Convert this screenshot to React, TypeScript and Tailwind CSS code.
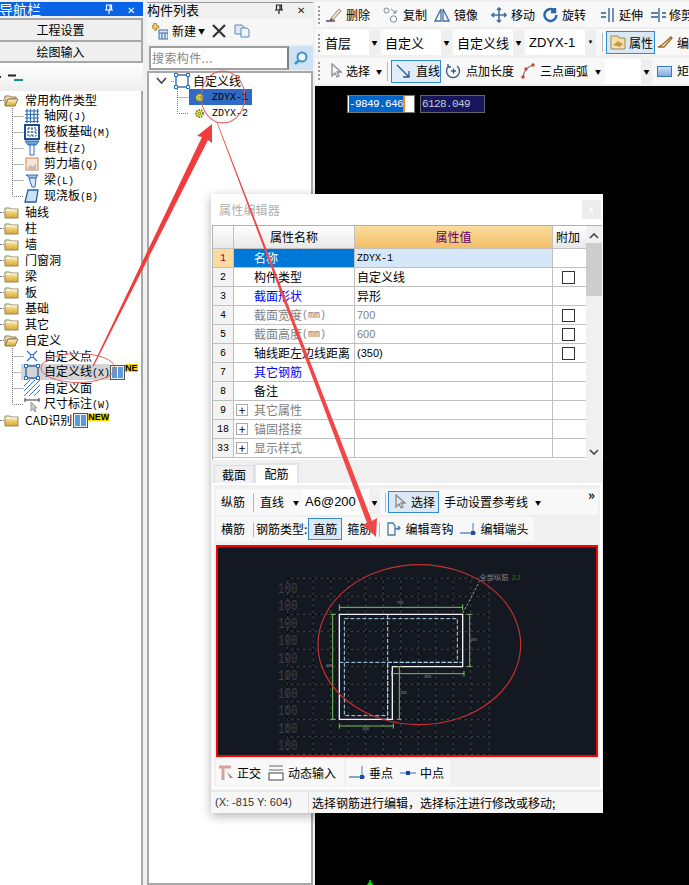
import React from "react";

const Folder = ({ open }: { open?: boolean }) => (
  <svg width="15" height="13" viewBox="0 0 15 13" className="shrink-0">
    <defs>
      <linearGradient id="fg" x1="0" y1="0" x2="0" y2="1">
        <stop offset="0" stopColor="#fff6c8" />
        <stop offset="1" stopColor="#d9a520" />
      </linearGradient>
    </defs>
    {open ? (
      <>
        <path d="M1 2h5l1 1h5v2H4L1 11z" fill="#f3e2a8" stroke="#8a7a5a" />
        <path d="M4 5h10l-3 7H1z" fill="url(#fg)" stroke="#8a7a5a" />
      </>
    ) : (
      <>
        <path d="M1 2h5l1 1h7v9H1z" fill="url(#fg)" stroke="#8a8a70" />
        <path d="M2 4h11" stroke="#fff8d8" />
      </>
    )}
  </svg>
);

const Ico = ({ n }: { n: string }) => {
  const c = "#2f6db5";
  const body: Record<string, React.ReactNode> = {
    grid: <path d="M1 3h14M1 6.5h14M1 10h14M1 13.5h14M3 1v14M6.5 1v14M10 1v14M13.5 1v14" stroke={c} strokeWidth="1.2" />,
    raft: <><rect x="1" y="1" width="14" height="14" fill="none" stroke="#1f4f8f" strokeWidth="2" /><path d="M4 4h8v8H4zM8 4v8M4 8h8" fill="none" stroke="#1f4f8f" strokeWidth="1" strokeDasharray="2 1" /></>,
    col: <><path d="M1 1h14l-3 4H4z" fill="#6fa3d8" stroke={c} /><path d="M6 5h4v10H6z" fill="#fff" stroke={c} /></>,
    wall: <><rect x="2" y="2" width="12" height="12" fill="#f4e6d6" stroke="#d88050" /><path d="M4 11l3-2 2 2 3-4v6H4z" fill="#aaa" opacity=".7" /></>,
    beam: <><path d="M2 3h12l-2 3H6z" fill="#a9cbe9" stroke={c} /><path d="M5 6l3 9h3l1-9z" fill="#d8e8f6" stroke={c} /></>,
    slab: <path d="M4 2h10l-2 12H1z" fill="#cfe2f5" stroke="#1f5fb0" strokeWidth="1.3" />,
    point: <><path d="M3 3l10 10M13 3L3 13" stroke="#3a79c0" strokeWidth="1.4" /><circle cx="8" cy="8" r="1.5" fill="#fff" stroke="#3a79c0" /></>,
    line: <><rect x="2" y="2" width="12" height="12" fill="none" stroke="#1f4f8f" strokeWidth="1.2" /><path d="M0.5 0.5h3v3h-3zM12.5 0.5h3v3h-3zM0.5 12.5h3v3h-3zM12.5 12.5h3v3h-3z" fill="#fff" stroke="#1a6ad0" /></>,
    face: <path d="M0 6l6-6M0 11L11 0M0 16L16 0M5 16L16 5M10 16l6-6" stroke="#3a79d0" strokeWidth="1" />,
    dim: <><path d="M1 2v4M15 2v4M1 4h14" stroke="#333" /><path d="M7 6v9l2-2 2 3 1-1-2-3h3z" fill="#ccc" stroke="#999" /></>,
  };
  return <svg width="16" height="16" viewBox="0 0 16 16" className="shrink-0">{body[n]}</svg>;
};

const Conn = ({ last }: { last?: boolean }) => (
  <svg width="12" height="16" className="shrink-0">
    <path d={last ? "M0.5 0v8.5H12" : "M0.5 0v16M0.5 8.5H12"} stroke="#777" strokeDasharray="1 1" fill="none" />
  </svg>
);

const Blocks = () => (
  <span className="w-[15px] h-[15px] border border-[#555] bg-[#e8f0f8] flex items-center justify-center gap-px shrink-0">
    <span className="w-[5px] h-[11px] bg-[#5b9bd8]" />
    <span className="w-[5px] h-[11px] bg-[#5b9bd8]" />
  </span>
);

const NewTag = ({ t }: { t: string }) => (
  <span className="font-['Liberation_Sans'] text-[9px] font-bold leading-[8px] bg-[#ffd800] text-black self-start">{t}</span>
);

const Mono = ({ children }: { children: React.ReactNode }) => (
  <span className="font-['Liberation_Mono'] text-[10px]">{children}</span>
);

const Root = ({ label, open, extra }: { label: React.ReactNode; open?: boolean; extra?: React.ReactNode }) => (
  <div className="h-4 flex items-center">
    <span className="w-[4px] border-t border-dotted border-[#777]" />
    <Folder open={open} />
    <span className="ml-[6px] whitespace-nowrap">{label}</span>
    {extra}
  </div>
);

const Child = ({ icon, label, last, sel, extra }: { icon: string; label: React.ReactNode; last?: boolean; sel?: boolean; extra?: React.ReactNode }) => (
  <div className="h-4 flex items-center pl-[12px]">
    <Conn last={last} />
    <div className={`flex items-center h-4 -ml-[3px] pl-[3px] ${sel ? "bg-[#d4d4d4]" : ""}`}>
      <Ico n={icon} />
      <span className="ml-[4px] whitespace-nowrap">{label}</span>
    </div>
    {extra}
  </div>
);

const LeftPanel = () => (
  <div className="w-[147px] h-full shrink-0 flex flex-col pt-[2px] pr-[4px] bg-[#f0f0f0]">
    <div className="h-[14px] bg-[#0a62e6] text-white flex items-center relative overflow-hidden text-[14px]">
      <span className="-ml-px whitespace-nowrap">导航栏</span>
      <span className="ml-auto mr-[8px] flex items-center gap-[13px] text-[10px]"><Pin c="#fff" /><span>✕</span></span>
    </div>
    <div className="h-[24px] mt-[2px] border-[2px] border-[#a8a8a8] border-l-0 bg-[#efefef] flex items-center justify-center pr-[20px] text-[12px]">工程设置</div>
    <div className="h-[21px] border-[2px] border-[#a8a8a8] border-l-0 border-t-0 bg-[#efefef] flex items-center justify-center pr-[20px] text-[12px]">绘图输入</div>
    <div className="h-[28px] bg-gradient-to-b from-white to-[#eeeeee] flex items-start pt-[10px]">
      <svg width="26" height="12"><path d="M0 4h1M8 2.5h8" stroke="#222" strokeWidth="2" /><path d="M14 7h9" stroke="#0f8f8f" strokeWidth="2" /></svg>
    </div>
    <div className="flex-1 bg-white border-r-[2px] border-[#a8a8a8] pt-[1px] text-[12px] leading-4 text-black">
      <Root open label="常用构件类型" />
      <Child icon="grid" label={<>轴网<Mono>(J)</Mono></>} />
      <Child icon="raft" label={<>筏板基础<Mono>(M)</Mono></>} />
      <Child icon="col" label={<>框柱<Mono>(Z)</Mono></>} />
      <Child icon="wall" label={<>剪力墙<Mono>(Q)</Mono></>} />
      <Child icon="beam" label={<>梁<Mono>(L)</Mono></>} />
      <Child icon="slab" last label={<>现浇板<Mono>(B)</Mono></>} />
      {["轴线", "柱", "墙", "门窗洞", "梁", "板", "基础", "其它"].map((t, i) => <Root key={i} label={t} />)}
      <Root open label="自定义" />
      <Child icon="point" label="自定义点" />
      <Child icon="line" sel label={<>自定义线<Mono>(X)</Mono></>} extra={<><Blocks /><NewTag t="NE" /></>} />
      <Child icon="face" label="自定义面" />
      <Child icon="dim" last label={<>尺寸标注<Mono>(W)</Mono></>} />
      <Root label={<>CAD识别</>} extra={<span className="ml-[1px] flex items-start"><Blocks /><NewTag t="NEW" /></span>} />
    </div>
  </div>
);

const Pin = ({ c }: { c: string }) => (
  <svg width="10" height="11" viewBox="0 0 10 11"><path d="M2.5 1h5v5h-5zM6 1v5M1 6h8M5 6v4" fill="none" stroke={c} strokeWidth="1.2" /></svg>
);

const ListPanel = () => (
  <div className="w-[168px] h-full shrink-0 flex flex-col pt-[2px] pr-[2px] bg-[#f0f0f0] text-black">
    <div className="h-[14px] bg-[#f0f0f0] border-t border-[#999] flex items-center text-[13px] leading-none">
      <span>构件列表</span>
      <span className="ml-auto mr-[8px] flex items-center gap-[13px] text-[10px] text-[#222]"><Pin c="#222" /><span>✕</span></span>
    </div>
    <div className="h-[26px] mt-[2px] bg-[#f7f7f7] flex items-center pl-[5px] text-[12px]">
      <svg width="16" height="18" viewBox="0 0 16 18"><path d="M2 2h4v3h3v3H6v3H3V8H0V5h2z" fill="#f0d060" stroke="#997a20" transform="scale(.75)" /><rect x="7" y="8" width="9" height="9" fill="#d8e6f5" stroke="#3f6fa8" /><path d="M7 11h9M10 11v6M13 11v6" stroke="#3f6fa8" /></svg>
      <span className="ml-[4px]">新建</span>
      <span className="ml-[2px] text-[7px]">▼</span>
      <svg width="14" height="14" viewBox="0 0 14 14" className="ml-[7px]"><path d="M1 1l12 12M13 1L1 13" stroke="#333" strokeWidth="2.2" /></svg>
      <svg width="16" height="14" viewBox="0 0 16 14" className="ml-[8px]"><path d="M1 1h7l2 2v7H1z" fill="#d8e8f6" stroke="#5a88b8" /><path d="M7 4h6l2 2v7H7z" fill="#eef5fb" stroke="#5a88b8" /></svg>
    </div>
    <div className="h-[24px] mt-[2px] flex pl-[2px]">
      <div className="flex-1 bg-white border-[2px] border-[#a0a0a0] border-r-[#808080] text-[#888] text-[12px] flex items-center pl-[1px] tracking-[0.4px]">搜索构件...</div>
      <div className="w-[24px] bg-[#cfe2f3] flex items-center justify-center">
        <svg width="16" height="16" viewBox="0 0 16 16"><circle cx="9" cy="7" r="4.5" fill="#eef6fc" stroke="#3c8fd0" strokeWidth="2" /><path d="M5.5 10.5L2 14" stroke="#3c8fd0" strokeWidth="2.5" /></svg>
      </div>
    </div>
    <div className="flex-1 mt-[1px] bg-white border-[2px] border-[#a8a8a8] pl-[6px] text-[12px]">
      <div className="h-[16px] flex items-center">
        <svg width="11" height="8" viewBox="0 0 11 8" className="ml-[1px]"><path d="M1 1l4.5 5L10 1" fill="none" stroke="#444" strokeWidth="1.6" /></svg>
        <span className="ml-[4px] w-[3px] border-t border-dotted border-[#777]" />
        <Ico n="line" />
        <span className="ml-[3px] text-[12px] leading-none">自定义线</span>
      </div>
      <div className="pl-[22px] h-[16px] flex items-center">
        <Conn />
        <div className="h-[16px] w-[63px] flex items-center bg-[#316ac5] pl-[5px] text-black">
          <Gear />
          <span className="ml-[7px] font-['Liberation_Mono'] text-[10px]">ZDYX-1</span>
        </div>
      </div>
      <div className="pl-[22px] h-[16px] flex items-center">
        <Conn last />
        <div className="h-[16px] flex items-center pl-[5px]">
          <Gear />
          <span className="ml-[7px] font-['Liberation_Mono'] text-[10px]">ZDYX-2</span>
        </div>
      </div>
    </div>
  </div>
);

const Gear = () => (
  <svg width="11" height="11" viewBox="0 0 11 11" className="shrink-0">
    <circle cx="5.5" cy="5.5" r="3.5" fill="#ffff00" stroke="#777" strokeWidth="2" strokeDasharray="1.5 1" />
    <circle cx="5.5" cy="5.5" r="1.3" fill="#ffff00" stroke="#555" strokeWidth=".7" />
  </svg>
);

const Grip = () => (
  <span className="flex flex-col gap-[2px] mx-[3px] shrink-0">
    {[0, 1, 2, 3, 4].map((i) => <span key={i} className="w-[2px] h-[2px] bg-[#9a9a9a]" />)}
  </span>
);
const Combo = ({ t, w }: { t: string; w: string }) => (
  <div className={`${w} h-[25px] bg-white flex items-center pl-[2px] mr-[3px] shrink-0`}>
    <span className="flex-1 whitespace-nowrap text-[13px] leading-none">{t}</span>
    <span className="w-[11px] h-full bg-[#eeeeee] flex items-center justify-center text-[6px]">▼</span>
  </div>
);

const TI = ({ d, sw, c = "#3a6ea5", w = 16 }: { d: string; sw?: number; c?: string; w?: number }) => (
  <svg width={w} height="16" viewBox={`0 0 ${w} 16`} className="shrink-0"><path d={d} fill="none" stroke={c} strokeWidth={sw ?? 1.3} /></svg>
);

const TopBars = () => (
  <div className="flex-1 min-w-0 h-full flex flex-col bg-black">
    <div className="h-[86px] bg-[#efefef] pt-[2px] overflow-hidden text-[12px] text-black">
      <div className="h-[25px] bg-[#f8f8f8] flex items-center whitespace-nowrap">
        <Grip />
        <span className="ml-[3px]"><svg width="16" height="16" viewBox="0 0 16 16"><path d="M0 14h9" stroke="#444" strokeWidth="1.4" /><path d="M5 11L13 2l2 2-8 9z" fill="#f3dfc0" stroke="#888" /><path d="M3 14l2-3 2 2z" fill="#555" /></svg></span>
        <span className="ml-[4px]">删除</span><span className="w-px h-[16px] bg-[#b8b8b8] ml-[7px] mr-[6px]" />
        <svg width="16" height="16" viewBox="0 0 16 16" className="shrink-0"><circle cx="3.5" cy="3.5" r="2.5" fill="none" stroke="#7a8896" /><circle cx="10.5" cy="12" r="3.2" fill="none" stroke="#7a8896" /><path d="M8 2l5 4M13 3v3h-3" fill="none" stroke="#7a8896" /></svg>
        <span className="ml-[4px]">复制</span>
        <span className="ml-[7px]"><TI d="M7 2v12H1zM9 2v12h6z" c="#41709f" /></span>
        <span className="ml-[4px]">镜像</span><span className="w-px h-[16px] bg-[#b8b8b8] ml-[7px] mr-[6px]" />
        <TI d="M8 1v14M1 8h14M6 3l2-2 2 2M6 13l2 2 2-2M3 6L1 8l2 2M13 6l2 2-2 2" c="#41709f" sw={1.6} />
        <span className="ml-[4px]">移动</span>
        <span className="ml-[8px]"><TI d="M12 4a6 6 0 1 0 1.5 4M12 1v4H8" c="#2a66b0" sw={2.4} /></span>
        <span className="ml-[3px]">旋转</span><span className="w-px h-[16px] bg-[#b8b8b8] ml-[6px] mr-[6px]" />
        <span className="ml-[2px]"><TI d="M1 6h5M1 10h5M9 1v14M13 1v14M7 8h0" c="#2a5a90" /></span>
        <span className="ml-[3px]">延伸</span>
        <span className="ml-[7px]"><TI d="M1 6h7M1 10h7M9 1v14M12 6h4M12 10h4" c="#2a5a90" /></span>
        <span className="ml-[3px]">修剪</span>
      </div>
      <div className="h-[26px] mt-[2px] bg-[#f8f8f8] flex items-center whitespace-nowrap pt-px">
        <Grip />
        <Combo t="首层" w="w-[57px]" />
        <Combo t="自定义" w="w-[69px]" />
        <Combo t="自定义线" w="w-[69px]" />
        <span className="font-['Liberation_Sans']"><Combo t="ZDYX-1" w="w-[69px]" /></span>
        <span className="w-px h-[19px] bg-[#b8b8b8] mx-[3px]" />
        <div className="w-[51px] h-[23px] border border-[#2f8ad0] bg-[#d8e8f5] flex items-center pl-[3px]">
          <svg width="16" height="15" viewBox="0 0 16 15"><path d="M1 1h7l1 2h6v11H1z" fill="#f6e2a8" stroke="#9a8858" /><path d="M3 10l5-4 5 3-3 3z" fill="#c89850" /></svg>
          <span className="ml-[3px]">属性</span>
        </div>
        <span className="ml-[2px]"><TI d="M1 12l4-2 9-8 1 1-8 9H1z" c="#a06820" /></span>
        <span className="ml-[4px]">编</span>
      </div>
      <div className="h-[26px] mt-[3px] bg-[#f8f8f8] flex items-center whitespace-nowrap">
        <Grip />
        <span className="ml-[6px]"><TI d="M3 1v12l3-3 2 4 2-1-2-4h4z" c="#8a8a9a" w={13} /></span>
        <span className="ml-[4px]">选择</span>
        <span className="ml-[6px] text-[6px]">▼</span>
        <span className="w-px h-[19px] bg-[#b8b8b8] ml-[5px] mr-[3px]" />
        <div className="w-[51px] h-[23px] border border-[#2f8ad0] bg-[#e0ecf7] flex items-center pl-[4px]">
          <TI d="M1 2l12 12M13 8v6H7" c="#2a5a90" />
          <span className="ml-[4px]">直线</span>
        </div>
        <span className="ml-[4px]"><TI d="M4 3a6.5 6.5 0 1 0 8 0M6 8h5M8.5 5.5v5M3 1v3h3" c="#2a5a80" /></span>
        <span className="ml-[5px]">点加长度</span>
        <span className="ml-[7px]"><svg width="14" height="16" viewBox="0 0 14 16"><path d="M2 14Q3 5 12 2" fill="none" stroke="#555" /><circle cx="2" cy="14" r="1.7" fill="#d04030" /><circle cx="5" cy="6" r="1.7" fill="#d04030" /><circle cx="12" cy="2" r="1.7" fill="#d04030" /></svg></span>
        <span className="ml-[5px]">三点画弧</span>
        <span className="ml-[7px] text-[6px]">▼</span>
        <div className="w-[55px] h-[25px] ml-[4px] bg-white flex justify-end">
          <span className="w-[11px] h-full bg-[#eeeeee] flex items-center justify-center text-[6px]">▼</span>
        </div>
        <span className="ml-[5px] w-[15px] h-[11px] border border-[#3a78c0] bg-gradient-to-b from-[#cfe0f5] to-[#7faadf] shrink-0" />
        <span className="ml-[5px]">矩</span>
      </div>
    </div>
    <div className="flex items-start mt-[9px] ml-[32px] font-['Liberation_Mono'] text-[11px] tracking-[-0.6px] leading-[16px]">
      <div className="w-[68px] h-[18px] bg-white border border-[#777] pl-px"><span className="inline-block bg-[#0066cc] text-white border-r-[2px] border-[#f09020]">-9849.646</span></div>
      <div className="w-[65px] h-[18px] ml-[5px] bg-[#16165c] border border-[#666] text-[#c8c8d8] pl-px">6128.049</div>
    </div>
    <svg width="12" height="6" className="absolute left-[364px] top-[880px]"><path d="M6 0v6M3 6l3-4 3 4" stroke="#00e000" strokeWidth="1.5" fill="none" /></svg>
  </div>
);

const rows = [
  { n: "1", name: "名称", v: "ZDYX-1", sel: true, mono: true },
  { n: "2", name: "构件类型", v: "自定义线", chk: true },
  { n: "3", name: "截面形状", v: "异形", blue: true },
  { n: "4", name: "截面宽度(mm)", v: "700", gray: true, chk: true },
  { n: "5", name: "截面高度(mm)", v: "600", gray: true, chk: true },
  { n: "6", name: "轴线距左边线距离", v: "(350)", chk: true },
  { n: "7", name: "其它钢筋", v: "", blue: true },
  { n: "8", name: "备注", v: "" },
  { n: "9", name: "其它属性", v: "", gray: true, plus: true },
  { n: "18", name: "锚固搭接", v: "", gray: true, plus: true },
  { n: "33", name: "显示样式", v: "", gray: true, plus: true },
];

const PropTable = () => (
  <div className="h-[235px] mx-px border-t border-l border-[#b0b0b0] flex text-[12px] overflow-hidden bg-white">
    <div className="w-[373px] shrink-0">
      <div className="grid grid-cols-[21px_121px_198px_33px] h-[23px] border-b border-[#c0c0c0] bg-gradient-to-b from-white to-[#e8e8e8]">
        <div className="border-r border-[#c0c0c0]" />
        <div className="border-r border-[#c0c0c0] flex items-center justify-center">属性名称</div>
        <div className="border-r border-[#c0c0c0] flex items-center justify-center bg-gradient-to-b from-[#fbdb9f] to-[#f2bf64] text-[#660066]">属性值</div>
        <div className="flex items-center justify-center pr-[3px]">附加</div>
      </div>
      {rows.map((r) => (
        <div key={r.n} className="grid grid-cols-[21px_121px_198px_33px] h-[19px] border-b border-[#c0c0c0]">
          <div className={`border-r border-[#c0c0c0] flex items-center justify-center font-['Liberation_Mono'] text-[10px] ${r.sel ? "bg-[#fbdba0] text-[#8a0050]" : "bg-[#f3f3f3]"}`}>{r.n}</div>
          <div className={`border-r border-[#c0c0c0] flex items-center whitespace-nowrap ${r.plus ? "pl-[2px]" : "pl-[20px]"} ${r.sel ? "bg-[#0078d7] text-white" : r.blue ? "text-[#0000ff]" : r.gray ? "text-[#808080]" : "text-black"}`}>
            {r.plus && <span className="w-[12px] h-[12px] border border-[#aaa] flex items-center justify-center mr-[6px] text-black text-[12px] leading-none">+</span>}
            {r.name.includes("(mm)") ? <>{r.name.slice(0, 4)}<Mono>(mm)</Mono></> : r.name}
          </div>
          <div className={`border-r border-[#c0c0c0] flex items-center pl-[2px] ${r.sel ? "bg-[#d6e8f7]" : ""} ${r.gray ? "text-[#808080]" : "text-black"} ${/^[(\d]/.test(r.v) ? "font-['Liberation_Sans'] text-[11px]" : ""} ${r.mono ? "font-['Liberation_Mono'] !text-[10px]" : ""}`}>{r.v}</div>
          <div className="flex items-center justify-center pr-[3px]">
            {r.chk && <span className="w-[13px] h-[13px] border border-[#333] bg-white" />}
          </div>
        </div>
      ))}
    </div>
    <div className="flex-1 bg-[#f0f0f0] flex flex-col items-center text-[#333]">
      <svg width="10" height="6" className="mt-[7px]"><path d="M1 5l4-4 4 4" fill="none" stroke="#444" strokeWidth="1.6" /></svg>
      <div className="w-full h-[53px] mt-[4px] bg-[#cdcdcd]" />
      <svg width="10" height="6" className="mt-auto mb-[5px]"><path d="M1 1l4 4 4-4" fill="none" stroke="#444" strokeWidth="1.6" /></svg>
    </div>
  </div>
);

const Dim = ({ d }: { d: string }) => <path d={d} stroke="#7ac25e" strokeWidth="3" fill="none" />;

const Canvas = () => {
  const hs = [100, 154, 208, 260, 313, 365, 418, 470, 524, 575, 628];
  const vs = [218, 295, 347, 400, 452, 505, 557, 610, 662, 715, 767, 822];
  return (
    <div className="relative h-[212px] mx-[2px] mt-[4px] border-[2px] border-[#ff0000] bg-[#141820] shrink-0">
      <svg viewBox="0 0 1155 636" className="absolute -left-[3px] -top-[2px] w-[385px] h-[212px]">
        {hs.map((y) => <path key={y} d={`M218 ${y}H826`} stroke="#3a3f48" strokeWidth="3" />)}
        {vs.map((x) => <path key={x} d={`M${x} 97V628`} stroke="#3a3f48" strokeWidth="3" />)}
        {hs.map((y) => <path key={y} d={`M218 ${y}H826`} stroke="#000" strokeWidth="3" strokeDasharray="8 10" />)}
        {vs.map((x) => <path key={x} d={`M${x} 97V628`} stroke="#000" strokeWidth="3" strokeDasharray="8 10" />)}
        {[144, 195, 248, 300, 353, 405, 458, 510, 563, 615].map((y) => (
          <text key={y} x="189" y={y} fontSize="42" textLength="58" lengthAdjust="spacingAndGlyphs" fill="#3a3f48" fontFamily="Liberation Mono">100</text>
        ))}
        <path d="M388 221H727V352H518V512H388ZM518 210V523M373 352H743" fill="none" stroke="#a8d8f8" strokeWidth="3" strokeDasharray="12 6" />
        <path d="M373 208H743V365H532V523H373Z" fill="none" stroke="#f2f2f2" strokeWidth="4" />
        <Dim d="M373 187H743M373 178V197M743 178V197" />
        <Dim d="M353 208V523M346 208H362M346 523H362" />
        <Dim d="M764 208V365M755 208H770M755 365H770" />
        <Dim d="M530 386H747M530 378V394M747 378V394" />
        <Dim d="M553 365V523M545 365H560M545 523H560" />
        <Dim d="M373 543H535M373 535V551M535 535V551" />
        <path d="M743 205L793 110" stroke="#999" strokeWidth="3" strokeDasharray="8 5" />
        <text x="793" y="106" fontSize="22" fill="#808080" fontFamily="Noto Sans CJK SC">全部纵筋</text>
        <text x="890" y="106" fontSize="22" fill="#0a8a0a" fontFamily="Liberation Mono">2J</text>
        <text x="545" y="177" fontSize="12" fill="#999">700</text>
        <text x="333" y="366" fontSize="12" fill="#999">600</text>
        <text x="765" y="288" fontSize="12" fill="#999">300</text>
        <text x="628" y="398" fontSize="12" fill="#999">400</text>
        <text x="555" y="446" fontSize="12" fill="#999">300</text>
        <text x="442" y="554" fontSize="12" fill="#999">300</text>
        <ellipse cx="613" cy="299" rx="304" ry="240" fill="none" stroke="#c83030" strokeWidth="3.5" />
      </svg>
    </div>
  );
};

const Pill = ({ children, c }: { children: React.ReactNode; c?: string }) => (
  <div className={`flex items-center bg-[#f8f8f8] whitespace-nowrap text-[12px] shrink-0 ${c ?? ""}`}>{children}</div>
);

const Dialog = () => (
  <div className="absolute left-[211px] top-[194px] w-[392px] h-[619px] bg-white shadow-[0_3px_10px_rgba(0,0,0,0.3)] flex flex-col text-black">
    <div className="h-[31px] flex items-center pl-[8px] pr-[2px] text-[12px] text-[#b0b0b0] shrink-0 tracking-[0.2px]">
      <span>属性编辑器</span>
      <span className="ml-auto w-[19px] h-[19px] bg-[#ececec] text-white flex items-center justify-center text-[9px] font-bold">x</span>
    </div>
    <PropTable />
    <div className="flex items-end bg-[#f0f0f0] h-[23px] pl-[3px] shrink-0 text-[12px]">
      <div className="w-[40px] h-[18px] border border-[#ddd] border-b-0 flex items-center justify-center bg-[#f0f0f0]">截面</div>
      <div className="w-[45px] h-[20px] border-2 border-[#e4e4e4] border-b-0 bg-white flex items-center justify-center">配筋</div>
    </div>
    <div className="flex-1 bg-[#f0f0f0] px-px pb-[2px] flex flex-col min-h-0">
      <div className="flex-1 border-[2px] border-white bg-[#f0f0f0] flex flex-col min-h-0 pt-[4px]">
        <Pill c="h-[26px] ml-[2px] mr-[2px]">
          <span className="ml-[5px]">纵筋</span>
          <span className="w-px h-[19px] bg-[#b8b8b8] ml-[8px] mr-[6px]" />
          <span>直线</span>
          <span className="ml-[9px] text-[6px]">▼</span>
          <div className="w-[77px] h-[24px] ml-[4px] bg-white flex items-center pl-[2px]">
            <span className="flex-1 font-['Liberation_Sans'] text-[13px]">A6@200</span>
            <span className="w-[11px] h-full bg-[#f0f0f0] flex items-center justify-center text-[6px]">▼</span>
          </div>
          <span className="w-px h-[19px] bg-[#b8b8b8] ml-[5px] mr-[2px]" />
          <div className="w-[51px] h-[22px] border border-[#2f8ad0] bg-[#dce9f5] flex items-center pl-[4px]">
            <TI d="M3 1v12l3-3 2 4 2-1-2-4h4z" c="#888" w={13} />
            <span className="ml-[5px]">选择</span>
          </div>
          <span className="ml-[5px]">手动设置参考线</span>
          <span className="ml-[7px] text-[6px]">▼</span>
          <span className="ml-auto mr-[3px] text-[13px] font-bold self-start leading-[12px]">»</span>
        </Pill>
        <Pill c="h-[24px] ml-[2px] w-[318px] mt-[2px]">
          <span className="ml-[5px]">横筋</span>
          <span className="w-px h-[15px] bg-[#b8b8b8] ml-[8px] mr-[2px]" />
          <span>钢筋类型:</span>
          <div className="w-[34px] h-[22px] ml-[1px] border border-[#2f8ad0] bg-[#dce9f5] flex items-center justify-center">直筋</div>
          <span className="ml-[5px]">箍筋</span>
          <span className="w-px h-[15px] bg-[#b8b8b8] ml-[8px] mr-[6px]" />
          <TI d="M2 14V2h5l2 3h0v9zM9 8l5-1M12 5l2 2-2 2" c="#4a7aa8" />
          <span className="ml-[3px]">编辑弯钩</span>
          <span className="ml-[7px]"><svg width="16" height="16" viewBox="0 0 16 16"><path d="M0 12h16" stroke="#5a8ac8" strokeWidth="1.5" /><path d="M13 2v10" stroke="#4a7ab8" /><rect x="11" y="10" width="4" height="4" fill="#1f4f9f" /></svg></span>
          <span className="ml-[4px]">编辑端头</span>
        </Pill>
        <Canvas />
        <div className="flex mt-[2px] ml-[2px] gap-[2px] h-[27px] shrink-0">
          <Pill c="h-full pl-[3px] w-[128px]">
            <svg width="16" height="16" viewBox="0 0 16 16"><path d="M0 2h12M4 2v13" stroke="#d8a0a0" strokeWidth="3" /><path d="M8 7l6 6-3 0z" fill="#888" /></svg>
            <span className="ml-[2px]">正交</span>
            <svg width="16" height="16" viewBox="0 0 16 16" className="ml-[7px]"><path d="M1 1h14M1 5h14" stroke="#999" strokeWidth="1.5" /><rect x="1" y="8" width="14" height="7" fill="#fff" stroke="#444" /></svg>
            <span className="ml-[4px]">动态输入</span>
          </Pill>
          <Pill c="h-full pl-[3px] w-[104px]">
            <svg width="16" height="16" viewBox="0 0 16 16"><path d="M0 12h16" stroke="#5a8ac8" strokeWidth="1.5" /><path d="M13 1v11" stroke="#4a7ab8" /><rect x="11" y="10" width="4" height="4" fill="#1f4f9f" /></svg>
            <span className="ml-[4px]">垂点</span>
            <svg width="16" height="8" viewBox="0 0 16 8" className="ml-[7px]"><path d="M0 4h16" stroke="#6a9ad8" strokeWidth="1.5" /><rect x="6" y="2" width="4" height="4" fill="#1f3f9f" /></svg>
            <span className="ml-[4px]">中点</span>
          </Pill>
        </div>
      </div>
    </div>
    <div className="h-[22px] shrink-0 flex bg-[#f6f6f6] text-[12px] border-t border-[#e8e8e8]">
      <div className="w-[98px] flex items-center pl-[4px] font-['Liberation_Sans'] text-[11px] text-[#333] border-r border-[#ddd] whitespace-nowrap">(X: -815 Y: 604)</div>
      <div className="flex-1 flex items-center pl-[3px] relative whitespace-nowrap">选择钢筋进行编辑，选择标注进行修改或移动;</div>
    </div>
  </div>
);

const Overlay = () => (
  <svg width="689" height="885" className="absolute left-0 top-0 pointer-events-none">
    <ellipse cx="78" cy="368" rx="37" ry="14.5" fill="none" stroke="#e86060" strokeWidth="1" />
    <circle cx="223" cy="97" r="22.5" fill="none" stroke="#e86060" strokeWidth="1" transform="translate(223 97) scale(.97 1.15) translate(-223 -97)" />
    <polygon points="92.5,366 93.5,366.5 208,140 212,143 212,124 197,136 202,137" fill="#f03c3c" />
    <polygon points="216.5,122 217.2,122 372,521 377,518 376,537 363,525 367,523" fill="#f04848" />
  </svg>
);

export default function App() {
  return (
    <div className="relative w-[689px] h-[885px] overflow-hidden flex bg-white font-['Noto_Sans_CJK_SC','Liberation_Sans',sans-serif] text-[12px]">
      <LeftPanel />
      <ListPanel />
      <TopBars />
      <Dialog />
      <Overlay />
    </div>
  );
}
